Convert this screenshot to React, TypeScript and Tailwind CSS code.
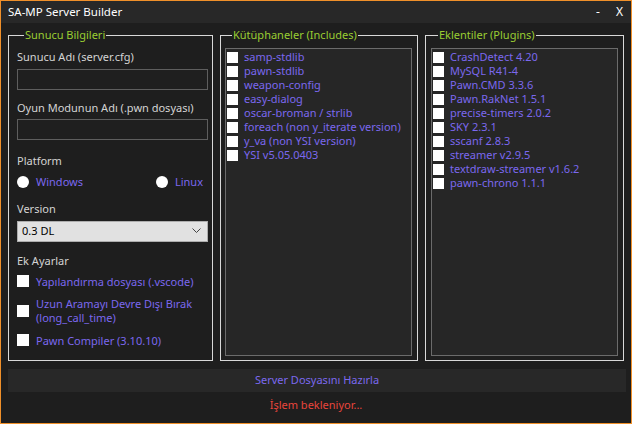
import { ReactNode } from 'react';

const includes = [
  'samp-stdlib',
  'pawn-stdlib',
  'weapon-config',
  'easy-dialog',
  'oscar-broman / strlib',
  'foreach (non y_iterate version)',
  'y_va (non YSI version)',
  'YSI v5.05.0403',
];

const plugins = [
  'CrashDetect 4.20',
  'MySQL R41-4',
  'Pawn.CMD 3.3.6',
  'Pawn.RakNet 1.5.1',
  'precise-timers 2.0.2',
  'SKY 2.3.1',
  'sscanf 2.8.3',
  'streamer v2.9.5',
  'textdraw-streamer v1.6.2',
  'pawn-chrono 1.1.1',
];

function Group({ title, className, children }: { title: string; className: string; children: ReactNode }) {
  return (
    <fieldset className={`border border-[#d9d9d9] ${className}`}>
      <legend className="ml-[7px] px-[1px] text-[11px] leading-[16px] text-[#9acd32]">{title}</legend>
      {children}
    </fieldset>
  );
}

function CheckList({ items }: { items: string[] }) {
  return (
    <div className="flex h-full flex-col border border-[#6b6b6b] bg-[#262626] pl-[1px] pt-[1px]">
      {items.map((item) => (
        <div key={item} className="flex h-[14px] items-center gap-[6px]">
          <span className="h-[11px] w-[11px] shrink-0 bg-white" />
          <span className="whitespace-nowrap text-[11px] leading-[14px] text-[#7b68ee]">{item}</span>
        </div>
      ))}
    </div>
  );
}

function Radio({ label }: { label: string }) {
  return (
    <div className="flex items-center gap-[7px]">
      <span className="h-[12px] w-[12px] rounded-full bg-white" />
      <span className="text-[11px] text-[#7b68ee]">{label}</span>
    </div>
  );
}

export default function App() {
  return (
    <div
      className="flex h-[424px] w-[632px] flex-col border border-[#f0902a] bg-[#1e1e1e] text-[#d4d4d4]"
      style={{ fontFamily: '"Noto Sans", "Open Sans", sans-serif' }}
    >
      {/* title bar */}
      <div className="flex h-[22px] shrink-0 items-center bg-[#282828] pl-[7px] pr-[8px] text-white">
        <span className="text-[11.5px]">SA-MP Server Builder</span>
        <span className="ml-auto text-[12px]">-</span>
        <span className="ml-[16px] text-[12px]">X</span>
      </div>

      <div className="flex flex-col px-[7px] pt-[4px]">
        <div className="flex h-[334px] gap-[7px]">
          {/* left settings */}
          <Group title="Sunucu Bilgileri" className="flex w-[206px] flex-col whitespace-nowrap pl-[8px] pr-[4px]">
            <div className="mt-[6px] text-[11px] leading-[16px]">Sunucu Adı (server.cfg)</div>
            <div className="mt-[4px] h-[21px] border border-[#5e5e5e] bg-[#1f1f1f]" />
            <div className="mt-[10px] text-[11px] leading-[16px]">Oyun Modunun Adı (.pwn dosyası)</div>
            <div className="mt-[3px] h-[21px] border border-[#5e5e5e] bg-[#1f1f1f]" />
            <div className="mt-[13px] text-[11px] leading-[16px]">Platform</div>
            <div className="mt-[5px] flex items-center justify-between pr-[5px]">
              <Radio label="Windows" />
              <Radio label="Linux" />
            </div>
            <div className="mt-[10px] text-[11px] leading-[16px]">Version</div>
            <div className="mt-[4px] flex h-[21px] items-center justify-between border border-[#adadad] bg-[#e1e1e1] pl-[4px] pr-[6px] text-[11px] text-black">
              <span>0.3 DL</span>
              <svg width="9" height="6" viewBox="0 0 9 6" fill="none" stroke="#444" strokeWidth="1">
                <path d="M0.5 0.5 L4.5 4.5 L8.5 0.5" />
              </svg>
            </div>
            <div className="mt-[11px] text-[11px] leading-[16px]">Ek Ayarlar</div>
            <div className="mt-[6px] flex flex-col gap-[9px] text-[11px] leading-[13px] text-[#7b68ee]">
              <div className="flex items-center gap-[7px]">
                <span className="h-[12px] w-[12px] shrink-0 bg-white" />
                <span>Yapılandırma dosyası (.vscode)</span>
              </div>
              <div className="flex items-center gap-[7px] leading-[14px]">
                <span className="h-[12px] w-[12px] shrink-0 bg-white" />
                <span>
                  Uzun Aramayı Devre Dışı Bırak
                  <br />
                  (long_call_time)
                </span>
              </div>
              <div className="flex items-center gap-[7px]">
                <span className="h-[12px] w-[12px] shrink-0 bg-white" />
                <span>Pawn Compiler (3.10.10)</span>
              </div>
            </div>
          </Group>

          {/* includes */}
          <Group title="Kütüphaneler (Includes)" className="w-[199px] pb-[4px] pl-[4px] pr-[5px] pt-[5px]">
            <CheckList items={includes} />
          </Group>

          {/* plugins */}
          <Group title="Eklentiler (Plugins)" className="w-[200px] pb-[4px] pl-[5px] pr-[5px] pt-[5px]">
            <CheckList items={plugins} />
          </Group>
        </div>

        <div className="mt-[8px] flex h-[23px] w-[618px] items-center justify-center bg-[#282828] text-[11px] text-[#7b68ee]">
          Server Dosyasını Hazırla
        </div>
        <div className="mt-[5px] text-center text-[11px] text-[#e8453c]">İşlem bekleniyor...</div>
      </div>
    </div>
  );
}
